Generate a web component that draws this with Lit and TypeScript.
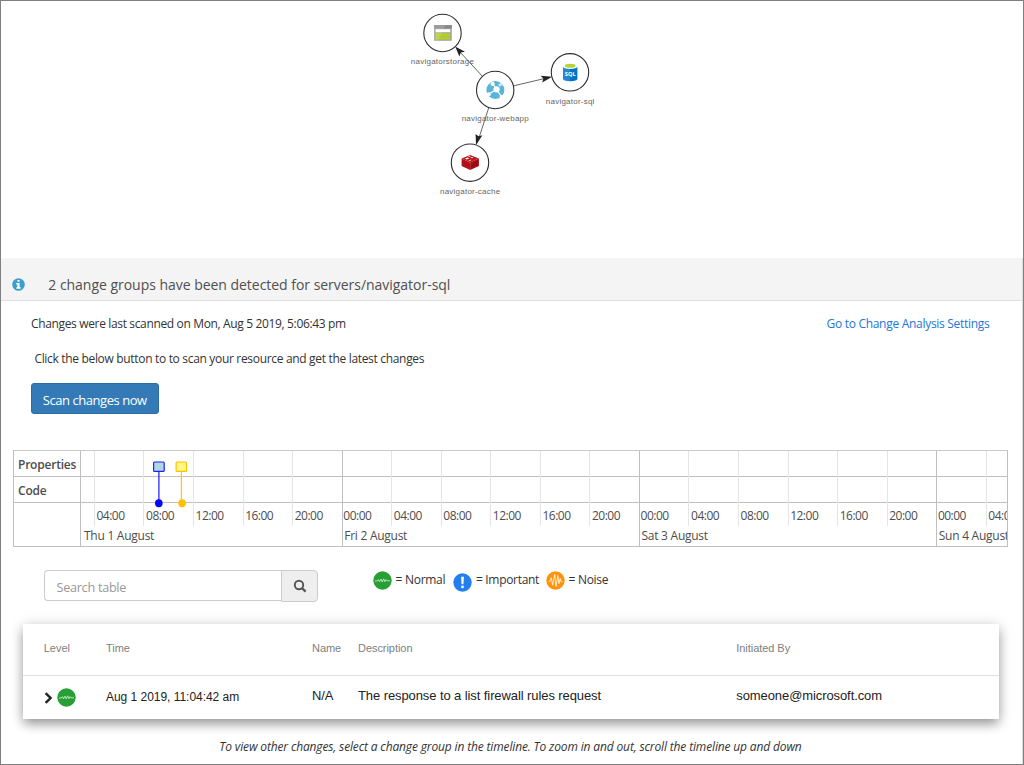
import { LitElement, html, css, svg } from "lit";
import { customElement, property } from "lit/decorators.js";

type Level = "normal" | "important" | "noise";

@customElement("level-icon")
export class LevelIcon extends LitElement {
  @property() level: Level = "normal";

  static styles = css`
    :host { display: block; width: 19px; height: 19px; flex: none; }
    svg { display: block; }
  `;

  private glyph() {
    switch (this.level) {
      case "important":
        return svg`<circle cx="9.5" cy="9.5" r="9.2" fill="#247fee"/>
          <path d="M8.1 3.8h2.8l-.5 7.4H8.6z" fill="#fff"/><circle cx="9.5" cy="13.9" r="1.4" fill="#fff"/>`;
      case "noise":
        return svg`<circle cx="9.5" cy="9.5" r="9.2" fill="#ff940a"/>
          <path d="M2.6 10.4h1.2l1.5-3.6 1.4 7.4L8.7 3.2l1.3 12.4 1.8-11 1.2 8 1.2-5 1 3.2h1.3" fill="none" stroke="#fff" stroke-width=".8" stroke-linejoin="round"/>`;
      default:
        return svg`<circle cx="9.5" cy="9.5" r="9.2" fill="#279f35"/>
          <path d="M2 10h2.2l1.2-1.4 1.1 2.2 1.5-2.8 1.2 3 1.5-3.2 1.2 3 1.2-2.2.8 1.2H17" fill="none" stroke="#d8f0d8" stroke-width=".8" stroke-linejoin="round"/>`;
    }
  }

  render() {
    return html`<svg width="19" height="19" viewBox="0 0 19 19">${this.glyph()}</svg>`;
  }
}

@customElement("resource-graph")
export class ResourceGraph extends LitElement {
  static styles = css`
    :host { display: block; height: 257px; }
    svg { display: block; }
    .edge { stroke: #555; stroke-width: 0.9; }
    .ring { fill: #fff; stroke: #2e2e2e; stroke-width: 1.1; }
    .name { font: 8px "Liberation Sans", Arial, sans-serif; letter-spacing: 0.23px; fill: #666; text-anchor: middle; }
    .sql { font: bold 5.6px "Open Sans", sans-serif; fill: #fff; text-anchor: middle; }
  `;

  render() {
    const names: [string, number, number][] = [
      ["navigatorstorage", 442.5, 64],
      ["navigator-webapp", 495.3, 121],
      ["navigator-sql", 570.2, 103.5],
      ["navigator-cache", 470.2, 194],
    ];
    const rings = [[442.5, 33], [495.2, 90], [570, 72.3], [470, 162.7]];
    return html`
      <svg width="1021" height="257" viewBox="1 1 1021 257">
        ${rings.map(([x, y]) => svg`<circle class="ring" cx=${x} cy=${y} r="18.7"/>`)}

        <g>
          <rect x="434" y="25" width="17.8" height="15.8" fill="#a3a3a3"/>
          <path d="M434 25h17.8v3.6H434z" fill="#8a8a8a"/>
          <path d="M435.6 29.2h14.6v3h-14.6z" fill="#fff"/>
          <path d="M435.6 33.2h14.6v2.7h-14.6zM435.6 36.6h14.6v2.9h-14.6z" fill="#b5d11f"/>
          <path d="M434 25h11.5l-7.5 15.8h-4z" fill="#fff" opacity=".15"/>
        </g>

        <g>
          <circle cx="495.4" cy="90" r="9" fill="#59b4d9"/>
          <g fill="none" stroke="#fff">
            <path d="M488.5 94.3l8-4.8M496.5 89.5l-3.7-6M496.5 89.5l5 7.1" stroke-width="1.2"/>
          </g>
          <circle cx="496.6" cy="89.3" r="3.1" fill="#fff"/>
          <circle cx="492.6" cy="84" r="2.1" fill="#fff"/>
          <circle cx="488.8" cy="94.3" r="2" fill="#fff"/>
          <circle cx="501.3" cy="96.4" r="1.7" fill="#fff"/>
          <path d="M498 84.3l3.4-1.4 1.2 2-2.9 1.8z" fill="#fff" opacity=".7"/>
        </g>

        <g>
          <path d="M563 66.6h14.4v12.2q0 2.4-7.2 2.4t-7.2-2.4z" fill="#0072c6"/>
          <path d="M563 66.6h7.2v14.6q-7.2 0-7.2-2.4z" fill="#fff" opacity=".15"/>
          <ellipse cx="570.2" cy="66.6" rx="7.2" ry="2.5" fill="#fff"/>
          <ellipse cx="570.2" cy="65.8" rx="5.4" ry="2" fill="#b8d432"/>
          <text class="sql" x="570.2" y="76.2">SQL</text>
        </g>

        <g>
          <path d="M461.6 158.5l8.6 4v7.6l-8.6-4.2z" fill="#b51218"/>
          <path d="M478.9 158.5l-8.7 4v7.6l8.7-4.2z" fill="#a00c12"/>
          <path d="M461.6 158.5l8.6-3.6 8.7 3.6-8.7 4z" fill="#bd1a1e"/>
          <path d="M461.6 162l8.6 4 8.7-4" fill="none" stroke="#8a0a10" stroke-width=".4"/>
          <path d="M465 158.4l2.8-.8 1.4 1-2.6.8zM470.4 157.6l2-.5.8.7-1.8.5zM468.4 160.2l2.6-.5-.8 1.4zM468 156.5l2-.5.5.7-1.8.4z" fill="#fff"/>
        </g>

        <path class="edge" d="M482.3 76.2L460 52M513.7 85.8L546 78.2M488.8 107.6L478.6 139"/>
        <path fill="#222" d="M455.2 46.6l9.8 5.2-4.2.8-1.4 4zM552.2 76.8l-10 5.8 1.2-4-2.8-2.9zM476 145.2l-.4-11.2 3 2.3 3.8-1z"/>
        ${names.map(([t, x, y]) => svg`<text class="name" x=${x} y=${y}>${t}</text>`)}
      </svg>`;
  }
}

@customElement("change-timeline")
export class ChangeTimeline extends LitElement {
  static styles = css`
    :host { display: block; font: 12px "Open Sans", "Noto Sans", sans-serif; color: #4d4d4d; }
    .box {
      position: relative; display: flex; height: 97px; width: 995px; box-sizing: border-box;
      border: 1px solid #bfbfbf; border-top-color: #c9c9c9; overflow: hidden;
      background: linear-gradient(#bfbfbf, #bfbfbf) 0 25px / 100% 1px no-repeat,
                  linear-gradient(#bfbfbf, #bfbfbf) 0 51px / 100% 1px no-repeat, #fff;
    }
    .groups { width: 66px; flex: none; border-right: 1px solid #bfbfbf; font-weight: 600; letter-spacing: -0.22px; }
    .group { height: 26px; line-height: 27px; padding-left: 4px; }
    .days { display: flex; flex: 1; min-width: 0; overflow: hidden; }
    .day { flex: none; box-sizing: border-box; border-left: 1px solid #bfbfbf; }
    .day.first { border-left: 0; }
    .hours { display: flex; height: 75px; }
    .hour { width: 49.55px; box-sizing: border-box; flex: none; padding: 56px 0 0 1.6px; border-left: 1px solid #e5e5e5; line-height: 18px; letter-spacing: -0.5px; }
    .hour.midnight { border-left: 0; width: 48.55px; padding-left: 0.7px; }
    .first .hours { padding-left: 12.9px; }
    .date { line-height: 19px; padding-left: 1.6px; letter-spacing: -0.26px; white-space: nowrap; }
    .first .date { padding-left: 3px; }
    .pins { position: absolute; left: 0; top: 0; }
  `;

  private days = [
    { name: "Thu 1 August", hours: ["04:00", "08:00", "12:00", "16:00", "20:00"] },
    { name: "Fri 2 August", hours: ["00:00", "04:00", "08:00", "12:00", "16:00", "20:00"] },
    { name: "Sat 3 August", hours: ["00:00", "04:00", "08:00", "12:00", "16:00", "20:00"] },
    { name: "Sun 4 August", hours: ["00:00", "04:00"] },
  ];

  render() {
    return html`
      <div class="box">
        <div class="groups"><div class="group">Properties</div><div class="group">Code</div></div>
        <div class="days">
          ${this.days.map((d, i) => html`
            <div class="day ${i === 0 ? "first" : ""}">
              <div class="hours">${d.hours.map((h) => html`<div class="hour ${h === "00:00" ? "midnight" : ""}">${h}</div>`)}</div>
              <div class="date">${d.name}</div>
            </div>`)}
        </div>
        <svg class="pins" width="240" height="60" viewBox="14 451 240 60">
          <path d="M158.9 471v32" stroke="#2b2bef" stroke-width="1.3"/>
          <path d="M181.4 471v32" stroke="#ffc526" stroke-width="1.3"/>
          <rect x="153.6" y="462" width="10.6" height="9.4" rx="1" fill="#add8e6" stroke="#2222f0" stroke-width="1.2"/>
          <rect x="176.1" y="462" width="10.4" height="9.4" rx="1" fill="#fff785" stroke="#ffc200" stroke-width="1.2"/>
          <ellipse cx="158.8" cy="503.2" rx="3.8" ry="4" fill="#0505fa"/>
          <ellipse cx="182.1" cy="503.2" rx="3.8" ry="4" fill="#ffc000"/>
        </svg>
      </div>`;
  }
}

@customElement("app-root")
export class AppRoot extends LitElement {
  static styles = css`
    :host { display: block; font: 12px "Open Sans", "Noto Sans", sans-serif; color: #333; }
    .frame { box-sizing: border-box; width: 1024px; height: 765px; border: 1px solid #7f7f7f; background: #fff; overflow: hidden; }
    .panel { border-right: 1px solid #ddd; height: 506px; display: flow-root; }
    .banner { display: flex; align-items: center; box-sizing: border-box; height: 43px; padding: 10px 0 0 11px; gap: 23.3px; background: #f4f4f4; border-bottom: 1px solid #e0e0e0; font-size: 14px; letter-spacing: -0.03px; color: #505050; }
    .banner svg { flex: none; }
    .scanrow { display: flex; justify-content: space-between; line-height: 20px; padding: 13px 32.5px 0 30px; letter-spacing: -0.35px; }
    .link { color: #2375dc; letter-spacing: -0.29px; text-decoration: none; }
    .hint { line-height: 20px; padding: 15px 0 0 33.4px; letter-spacing: -0.32px; }
    .scan { display: block; box-sizing: border-box; width: 127.5px; height: 31px; margin: 14px 0 0 30px; padding: 3px 0 0; border: 1px solid #2e6da4; border-radius: 3px; background: #337ab7; color: #fff; font: 13px "Open Sans", sans-serif; letter-spacing: -0.45px; text-align: center; }
    change-timeline { margin: 36px 0 0 12px; }
    .tools { display: flex; padding: 23px 0 0 43px; height: 33px; }
    .search { display: flex; }
    .field { box-sizing: border-box; width: 237px; height: 31px; border: 1px solid #ccc; border-right: 0; border-radius: 4px 0 0 4px; padding: 1px 0 0 11.5px; line-height: 31px; font-size: 12.6px; letter-spacing: -0.25px; color: #999; }
    .go { box-sizing: border-box; width: 37px; height: 32px; border: 1px solid #ccc; border-radius: 0 4px 4px 0; background: #eee; display: grid; place-items: center; }
    .legend { display: flex; padding-left: 54.6px; letter-spacing: -0.3px; line-height: 20px; white-space: nowrap; }
    .key { display: flex; gap: 4px; }
    .key level-icon { margin-top: 1px; }
    .key.lower level-icon { margin-top: 2.5px; }
    .k1 { width: 80.3px; }
    .k2 { width: 92.7px; }
    .card { margin: 21px 0 0 21.5px; width: 976.5px; height: 95px; background: #fff; box-shadow: 0 6px 10px -1px rgba(0,0,0,.3), 0 2px 14px rgba(0,0,0,.2); font-family: "Liberation Sans", Arial, sans-serif; }
    .row { display: grid; grid-template-columns: 62.2px 206px 46px 378.3px 1fr; box-sizing: border-box; padding-left: 21.3px; }
    .head { height: 52px; line-height: 49px; border-bottom: 1px solid #e0e0e0; font-size: 11px; color: #808080; letter-spacing: -0.05px; }
    .item { height: 43px; line-height: 40px; font-size: 13px; color: #222; letter-spacing: -0.09px; }
    .level { display: flex; align-items: center; gap: 4.4px; box-sizing: border-box; height: 43px; }
    .time { font-size: 12px; letter-spacing: -0.03px; line-height: 43px; }
    .foot { margin: 18px 0 0 -2px; line-height: 20px; text-align: center; font-style: italic; letter-spacing: -0.145px; }
  `;

  render() {
    return html`
      <div class="frame">
        <resource-graph></resource-graph>
        <div class="panel">
          <div class="banner">
            <svg width="13" height="13" viewBox="0 0 13 13"><circle cx="6.5" cy="6.5" r="6.3" fill="#3a9fce"/><path d="M5.4 1.9h2.2v1.9H5.4zM4.3 5h3.3v4.2h1.1v1.5H4.3V9.2h1.1V6.5H4.3z" fill="#fff"/></svg>
            <span>2 change groups have been detected for servers/navigator-sql</span>
          </div>
          <div class="scanrow">
            <span>Changes were last scanned on Mon, Aug 5 2019, 5:06:43 pm</span>
            <a class="link">Go to Change Analysis Settings</a>
          </div>
          <div class="hint">Click the below button to to scan your resource and get the latest changes</div>
          <button class="scan">Scan changes now</button>
          <change-timeline></change-timeline>
          <div class="tools">
            <div class="search">
              <div class="field">Search table</div>
              <div class="go"><svg width="14" height="14" viewBox="0 0 14 14" fill="none" stroke="#555"><circle cx="6" cy="6" r="4.2" stroke-width="1.9"/><path d="M9 9l3.6 3.6" stroke-width="2.3"/></svg></div>
            </div>
            <div class="legend">
              <div class="key k1"><level-icon level="normal"></level-icon><span>= Normal</span></div>
              <div class="key k2 lower"><level-icon level="important"></level-icon><span>= Important</span></div>
              <div class="key"><level-icon level="noise"></level-icon><span>= Noise</span></div>
            </div>
          </div>
          <div class="card">
            <div class="row head"><span>Level</span><span>Time</span><span>Name</span><span>Description</span><span>Initiated By</span></div>
            <div class="row item">
              <span class="level"><svg width="9" height="12" viewBox="0 0 9 12"><path d="M1.6 1.2L6.6 6l-5 4.8" fill="none" stroke="#222" stroke-width="2.4"/></svg><level-icon level="normal"></level-icon></span>
              <span class="time">Aug 1 2019, 11:04:42 am</span><span>N/A</span><span>The response to a list firewall rules request</span><span>someone@microsoft.com</span>
            </div>
          </div>
          <div class="foot">To view other changes, select a change group in the timeline. To zoom in and out, scroll the timeline up and down</div>
        </div>
      </div>`;
  }
}
